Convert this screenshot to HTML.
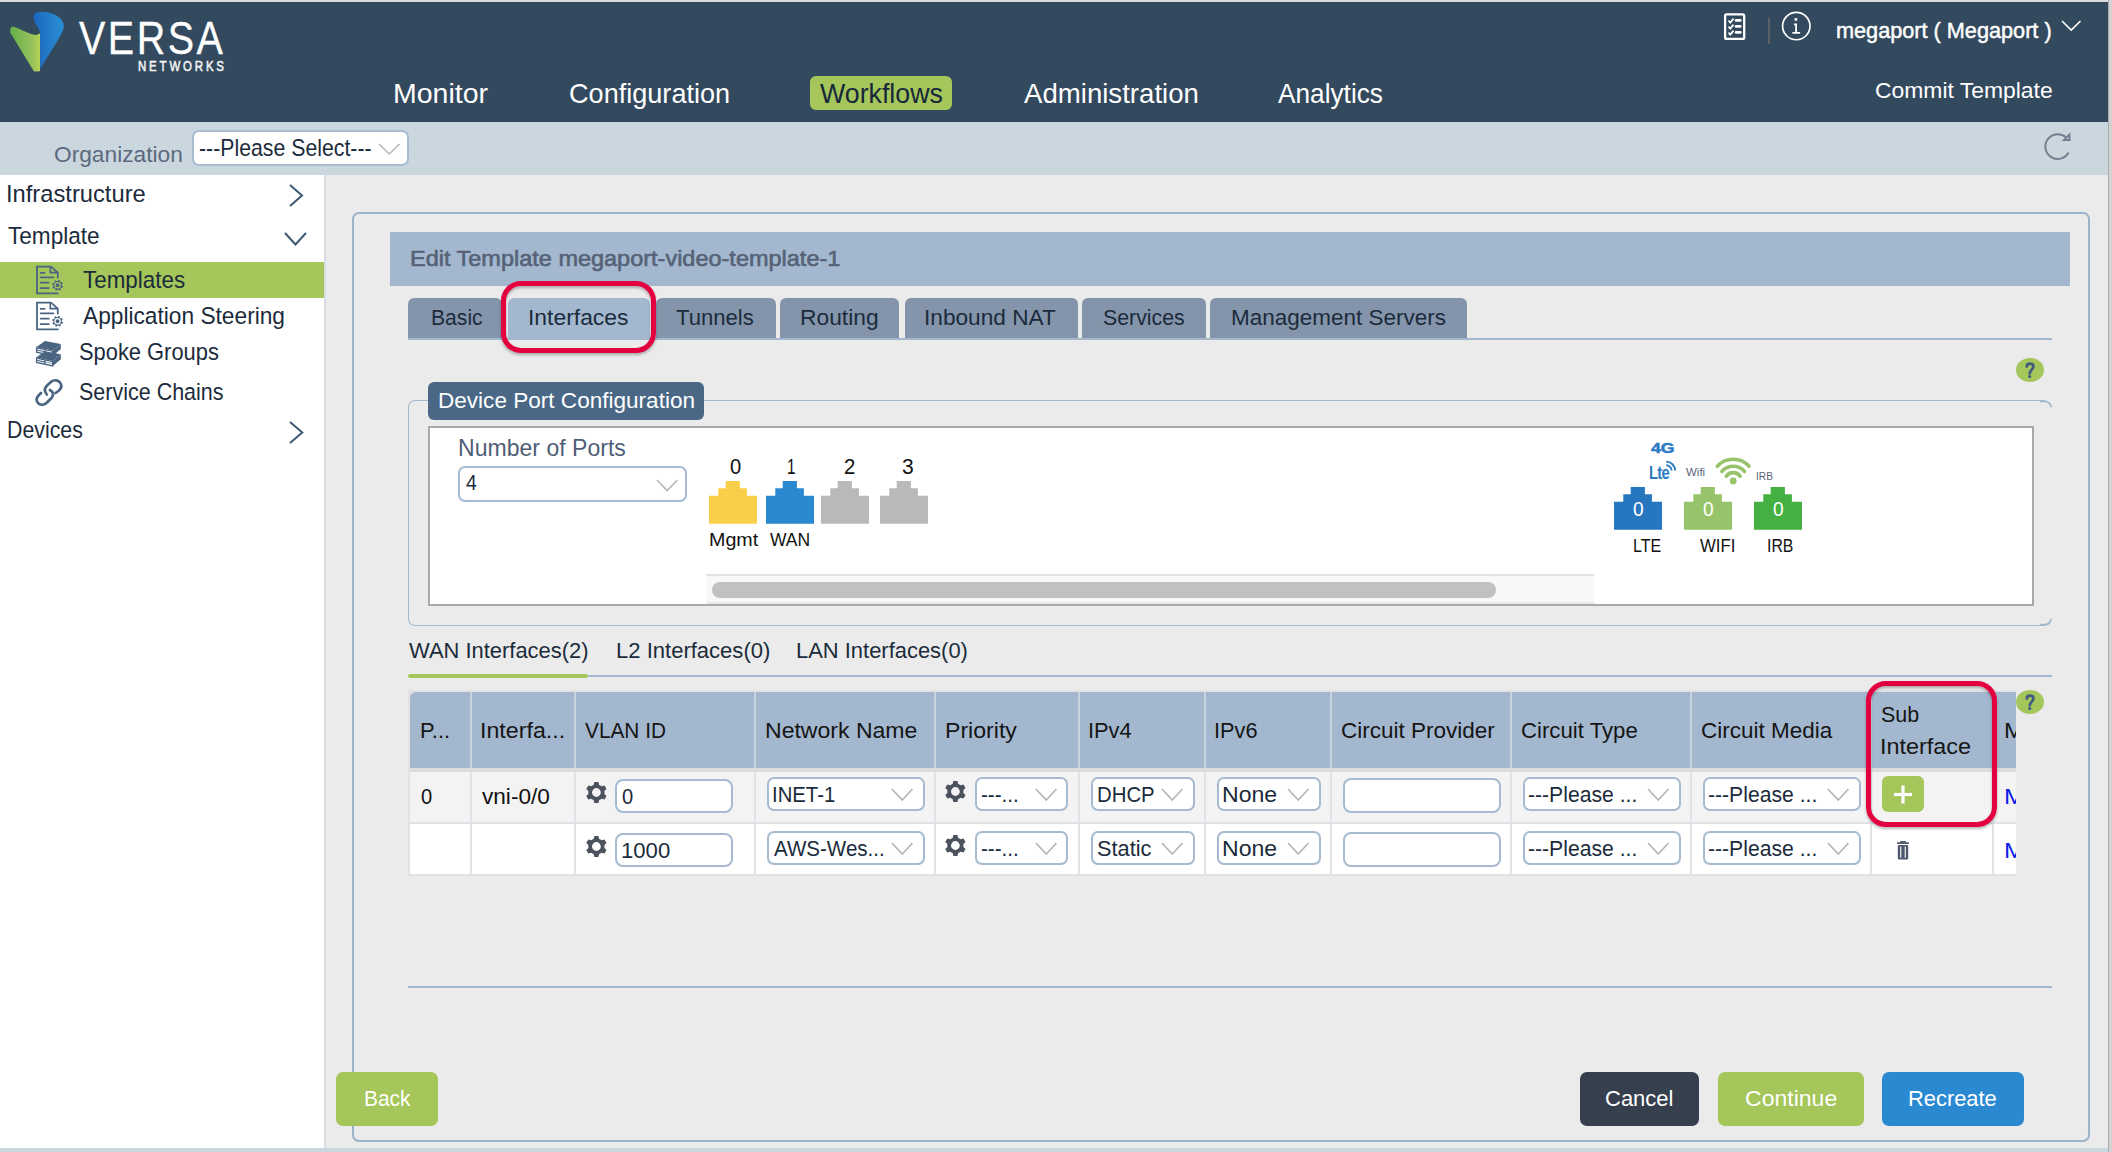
<!DOCTYPE html>
<html><head><meta charset="utf-8"><title>Versa</title>
<style>
html,body{margin:0;padding:0;width:2112px;height:1152px;overflow:hidden;background:#ebebeb;font-family:"Liberation Sans",sans-serif;}
body{position:relative;}
</style></head><body>
<div style="position:absolute;left:0px;top:0px;width:2112px;height:2px;background:#d9dadd;"></div>
<div style="position:absolute;left:0px;top:2px;width:2108px;height:120px;background:#33495e;"></div>
<div style="position:absolute;left:0px;top:122px;width:2108px;height:53px;background:#cbd7df;"></div>
<div style="position:absolute;left:0px;top:175px;width:324px;height:973px;background:#ffffff;"></div>
<div style="position:absolute;left:324px;top:175px;width:2px;height:973px;background:#d8dde3;"></div>
<div style="position:absolute;left:0px;top:1148px;width:2108px;height:4px;background:#cbd7df;"></div>
<div style="position:absolute;left:2108px;top:0px;width:1px;height:1152px;background:#a9a9a9;"></div>
<div style="position:absolute;left:2109px;top:0px;width:3px;height:1152px;background:#d3d3d3;"></div>
<svg style="position:absolute;left:0px;top:0px;" width="80" height="80" viewBox="0 0 80 80">
<defs>
<linearGradient id="lg" x1="0" y1="0" x2="1" y2="0"><stop offset="0" stop-color="#66ad4b"/><stop offset="0.75" stop-color="#97c25a"/><stop offset="1" stop-color="#b4d152"/></linearGradient>
<linearGradient id="lb" x1="0" y1="0" x2="1" y2="0"><stop offset="0" stop-color="#1d66bd"/><stop offset="1" stop-color="#2a90d6"/></linearGradient>
</defs>
<path d="M10.3,28.5 C11,26 14,26.5 18,28.3 C26,32 33,35.5 37,34.8 L40,33.2 L40,71.3 L34,71.5 L10.2,32.5 Z" fill="url(#lg)"/>
<path d="M40,33.2 C40,28 33.5,23.5 33.5,17 C33.5,12.5 38.5,11.5 44,11.8 C54,12.5 63.8,18 63.8,26.5 C63.8,33 50,52 40.2,69.3 Z" fill="url(#lb)"/>
</svg>
<div style="position:absolute;left:809.6px;top:76px;width:142.69999999999993px;height:33.7px;background:#a5c65a;border-radius:6px;"></div>
<svg style="position:absolute;left:1720px;top:10px;" width="30" height="34" viewBox="0 0 30 34">
<rect x="5.1" y="4.35" width="19.1" height="24.6" rx="1.4" fill="none" stroke="#fff" stroke-width="2.3"/>
<polyline points="8.5,10.6 10.3,12.6 13.5,8.6" fill="none" stroke="#fff" stroke-width="1.7"/>
<polyline points="8.5,16.6 10.3,18.6 13.5,14.6" fill="none" stroke="#fff" stroke-width="1.7"/>
<polyline points="8.5,22.6 10.3,24.6 13.5,20.6" fill="none" stroke="#fff" stroke-width="1.7"/>
<line x1="16" y1="10.4" x2="20.3" y2="10.4" stroke="#fff" stroke-width="2.6" stroke-linecap="round"/>
<line x1="16" y1="16.4" x2="20.3" y2="16.4" stroke="#fff" stroke-width="2.6" stroke-linecap="round"/>
<line x1="16" y1="22.4" x2="20.3" y2="22.4" stroke="#fff" stroke-width="2.6" stroke-linecap="round"/>
</svg>
<div style="position:absolute;left:1768.1px;top:18.2px;width:1.900000000000091px;height:25.599999999999998px;background:#5b5f66;"></div>
<svg style="position:absolute;left:1780px;top:10px;" width="32" height="32" viewBox="0 0 32 32">
<circle cx="16.3" cy="16.05" r="13.7" fill="none" stroke="#fff" stroke-width="1.7"/>
<rect x="14.6" y="8.1" width="2.6" height="2.6" fill="#fff"/>
<path d="M13.9,14.3 H16.1 V22.9 M12.4,22.9 H20.1" fill="none" stroke="#fff" stroke-width="1.8"/>
</svg>
<svg style="position:absolute;left:2060px;top:18.8px;" width="22.5" height="13.2" viewBox="0 0 22.5 13.2"><polyline points="2,2 11.25,11.2 20.5,2" fill="none" stroke="#ffffff" stroke-width="1.6"/></svg>
<div style="position:absolute;box-sizing:border-box;left:192px;top:130px;width:217px;height:35.5px;border:2px solid #a7bccf;border-radius:7px;background:#ffffff;"></div>
<svg style="position:absolute;left:376.5px;top:141.5px;" width="24.5" height="14.0" viewBox="0 0 24.5 14.0"><polyline points="2,2 12.25,12.0 22.5,2" fill="none" stroke="#b7b7b7" stroke-width="1.6"/></svg>
<svg style="position:absolute;left:2040px;top:128px;" width="36" height="36" viewBox="0 0 36 36">
<path d="M26.3,9.6 A12.4,12.4 0 1 0 28.6,24.6" fill="none" stroke="#747e8f" stroke-width="2"/>
<polygon points="29.4,6.6 24,11.9 29.6,11.9" fill="none" stroke="#747e8f" stroke-width="2" stroke-linejoin="miter"/>
</svg>
<svg style="position:absolute;left:288px;top:182.5px;" width="16" height="25.0" viewBox="0 0 16 25.0"><polyline points="2,2 14,12.5 2,23.0" fill="none" stroke="#3e5876" stroke-width="2"/></svg>
<svg style="position:absolute;left:282.5px;top:231px;" width="25.0" height="15.5" viewBox="0 0 25.0 15.5"><polyline points="2,2 12.5,13.5 23.0,2" fill="none" stroke="#3e5876" stroke-width="2"/></svg>
<div style="position:absolute;left:0px;top:261.7px;width:324px;height:36.0px;background:#a5c65a;"></div>
<svg style="position:absolute;left:288px;top:420.3px;" width="16.30000000000001" height="25.099999999999966" viewBox="0 0 16.30000000000001 25.099999999999966"><polyline points="2,2 14.300000000000011,12.549999999999983 2,23.099999999999966" fill="none" stroke="#3e5876" stroke-width="2"/></svg>
<svg style="position:absolute;left:32px;top:260px;" width="34" height="36" viewBox="0 0 34 36">
<path d="M5,6.6 H19 L25.8,12.6 V17.6" fill="none" stroke="#4a6482" stroke-width="1.8" stroke-linejoin="round" stroke-linecap="round"/>
<path d="M18.3,7 V12.6 H25.5" fill="none" stroke="#4a6482" stroke-width="1.6"/>
<path d="M5,6.6 V33.4 H25.8" fill="none" stroke="#4a6482" stroke-width="1.8" stroke-linecap="round"/>
<line x1="8.6" y1="12.8" x2="12.6" y2="12.8" stroke="#4a6482" stroke-width="1.8" stroke-linecap="round"/>
<line x1="8.6" y1="17.3" x2="21.4" y2="17.3" stroke="#4a6482" stroke-width="1.8" stroke-linecap="round"/>
<line x1="8.6" y1="22.6" x2="16.8" y2="22.6" stroke="#4a6482" stroke-width="1.8" stroke-linecap="round"/>
<line x1="8.6" y1="28.1" x2="16.8" y2="28.1" stroke="#4a6482" stroke-width="1.8" stroke-linecap="round"/>
<polygon points="29.80,25.30 31.09,26.39 30.77,27.44 29.09,27.63 28.57,28.27 28.71,29.96 27.74,30.47 26.42,29.42 25.60,29.50 24.51,30.79 23.46,30.47 23.27,28.79 22.63,28.27 20.94,28.41 20.43,27.44 21.48,26.12 21.40,25.30 20.11,24.21 20.43,23.16 22.11,22.97 22.63,22.33 22.49,20.64 23.46,20.13 24.78,21.18 25.60,21.10 26.69,19.81 27.74,20.13 27.93,21.81 28.57,22.33 30.26,22.19 30.77,23.16 29.72,24.48" fill="#4a6482"/>
<circle cx="25.6" cy="25.3" r="2.6" fill="none" stroke="#a5c65a" stroke-width="1.3"/>
</svg>
<svg style="position:absolute;left:32px;top:295.6px;" width="34" height="36" viewBox="0 0 34 36">
<path d="M5,6.6 H19 L25.8,12.6 V17.6" fill="none" stroke="#4a6482" stroke-width="1.8" stroke-linejoin="round" stroke-linecap="round"/>
<path d="M18.3,7 V12.6 H25.5" fill="none" stroke="#4a6482" stroke-width="1.6"/>
<path d="M5,6.6 V33.4 H25.8" fill="none" stroke="#4a6482" stroke-width="1.8" stroke-linecap="round"/>
<line x1="8.6" y1="12.8" x2="12.6" y2="12.8" stroke="#4a6482" stroke-width="1.8" stroke-linecap="round"/>
<line x1="8.6" y1="17.3" x2="21.4" y2="17.3" stroke="#4a6482" stroke-width="1.8" stroke-linecap="round"/>
<line x1="8.6" y1="22.6" x2="16.8" y2="22.6" stroke="#4a6482" stroke-width="1.8" stroke-linecap="round"/>
<line x1="8.6" y1="28.1" x2="16.8" y2="28.1" stroke="#4a6482" stroke-width="1.8" stroke-linecap="round"/>
<polygon points="29.80,25.30 31.09,26.39 30.77,27.44 29.09,27.63 28.57,28.27 28.71,29.96 27.74,30.47 26.42,29.42 25.60,29.50 24.51,30.79 23.46,30.47 23.27,28.79 22.63,28.27 20.94,28.41 20.43,27.44 21.48,26.12 21.40,25.30 20.11,24.21 20.43,23.16 22.11,22.97 22.63,22.33 22.49,20.64 23.46,20.13 24.78,21.18 25.60,21.10 26.69,19.81 27.74,20.13 27.93,21.81 28.57,22.33 30.26,22.19 30.77,23.16 29.72,24.48" fill="#4a6482"/>
<circle cx="25.6" cy="25.3" r="2.6" fill="none" stroke="#ffffff" stroke-width="1.3"/>
</svg>
<svg style="position:absolute;left:0;top:0" width="70" height="420" viewBox="0 0 70 420"><polygon points="36,347.3 45,341 60.8,344 52.6,350.6" fill="#4a6482"/>
<polygon points="36.6,347.9 52.6,351.2 52.6,355.6 36.6,352.2" fill="#fff" stroke="#4a6482" stroke-width="1.3"/>
<polygon points="52.6,350.6 60.8,344 60.8,349 52.6,356" fill="#4a6482"/>
<line x1="36.6" y1="350" x2="45" y2="351.8" stroke="#4a6482" stroke-width="1.1"/>
<line x1="45" y1="349.8" x2="45" y2="353.8" stroke="#4a6482" stroke-width="1.1"/>
<line x1="45" y1="351.8" x2="52.6" y2="353.4" stroke="#4a6482" stroke-width="0.6"/><polygon points="36,357.6 45,351.3 60.8,354.3 52.6,360.90000000000003" fill="#4a6482"/>
<polygon points="36.6,358.2 52.6,361.5 52.6,365.90000000000003 36.6,362.5" fill="#fff" stroke="#4a6482" stroke-width="1.3"/>
<polygon points="52.6,360.90000000000003 60.8,354.3 60.8,359.3 52.6,366.3" fill="#4a6482"/>
<line x1="36.6" y1="360.3" x2="45" y2="362.1" stroke="#4a6482" stroke-width="1.1"/>
<line x1="45" y1="360.1" x2="45" y2="364.1" stroke="#4a6482" stroke-width="1.1"/>
<line x1="45" y1="362.1" x2="52.6" y2="363.7" stroke="#4a6482" stroke-width="0.6"/></svg>
<svg style="position:absolute;left:0;top:0" width="70" height="420" viewBox="0 0 70 420">
<path d="M46.8,394.5 C44,391 44.5,388 47,385.5 L51.5,381.5 C54,379.5 58,380 60,382.5 C62,385 61.5,388 59,390.5 L55.5,393" fill="none" stroke="#4a6482" stroke-width="2.7" stroke-linecap="round"/>
<path d="M41,393 L38.5,395.5 C36,398 36,401.5 38.5,403.5 C41,405.5 44.5,405 47,402.5 L51.5,398 C54,395.5 53.5,392 50,390" fill="none" stroke="#4a6482" stroke-width="2.7" stroke-linecap="round"/>
</svg>
<div style="position:absolute;box-sizing:border-box;left:352px;top:212px;width:1738px;height:930px;border:2px solid #9bb3ca;border-radius:7px;background:transparent;"></div>
<div style="position:absolute;left:390px;top:232px;width:1680px;height:54px;background:#a3b8cf;"></div>
<div style="position:absolute;left:408px;top:338px;width:1644px;height:2px;background:#a3b8cf;"></div>
<div style="position:absolute;left:408.1px;top:298px;width:93.59999999999997px;height:40px;background:#8495ab;border-radius:6px 6px 0 0;"></div>
<div style="position:absolute;left:508px;top:298px;width:142px;height:41.5px;background:#a3b8cf;border-radius:6px 6px 0 0;"></div>
<div style="position:absolute;left:655.5px;top:298px;width:120.5px;height:40px;background:#8495ab;border-radius:6px 6px 0 0;"></div>
<div style="position:absolute;left:780px;top:298px;width:119.39999999999998px;height:40px;background:#8495ab;border-radius:6px 6px 0 0;"></div>
<div style="position:absolute;left:904.5px;top:298px;width:173.0999999999999px;height:40px;background:#8495ab;border-radius:6px 6px 0 0;"></div>
<div style="position:absolute;left:1082px;top:298px;width:124px;height:40px;background:#8495ab;border-radius:6px 6px 0 0;"></div>
<div style="position:absolute;left:1210.3px;top:298px;width:257.20000000000005px;height:40px;background:#8495ab;border-radius:6px 6px 0 0;"></div>
<div style="position:absolute;box-sizing:border-box;left:500.7px;top:280.9px;width:155.3px;height:72.10000000000002px;border:5.2px solid #e2003f;border-radius:20px;background:transparent;box-shadow:0 2px 3px rgba(0,0,0,.28), inset 0 2px 3px rgba(0,0,0,.28);"></div>
<svg style="position:absolute;left:2016px;top:358px;" width="28" height="24" viewBox="0 0 28 24"><ellipse cx="14.0" cy="12.0" rx="14.0" ry="12.0" fill="#a5c65a"/>
<path d="M10.8,8.6 C10.8,4.7 17.4,4.7 17.4,8.6 C17.4,11.4 14.1,11.8 13.7,15.3" fill="none" stroke="#3f5b80" stroke-width="2.7" stroke-linecap="round"/>
<circle cx="13.7" cy="18.5" r="1.6" fill="#3f5b80"/></svg>
<div style="position:absolute;box-sizing:border-box;left:408.3px;top:400.4px;width:1637px;height:225.3px;border:1.9px solid #a3b9ce;border-right:none;border-radius:7px 0 0 7px;"></div>
<svg style="position:absolute;left:2040px;top:396px;" width="16" height="234" viewBox="0 0 16 234"><path d="M5,5.35 A6,6 0 0 1 11,11.35" fill="none" stroke="#a3b9ce" stroke-width="1.9"/><path d="M5,228.75 A6,6 0 0 0 11,222.75" fill="none" stroke="#a3b9ce" stroke-width="1.9"/><line x1="0" y1="5.35" x2="5" y2="5.35" stroke="#a3b9ce" stroke-width="1.9"/><line x1="0" y1="228.75" x2="5" y2="228.75" stroke="#a3b9ce" stroke-width="1.9"/></svg>
<div style="position:absolute;left:428px;top:382px;width:276px;height:38px;background:#4a6886;border-radius:6px;"></div>
<div style="position:absolute;box-sizing:border-box;left:428px;top:426px;width:1606px;height:180px;border:2px solid #a9a9a9;border-radius:0px;background:#ffffff;"></div>
<div style="position:absolute;box-sizing:border-box;left:458.2px;top:466px;width:229.3px;height:35.80000000000001px;border:2px solid #a6bbd0;border-radius:7px;background:#ffffff;"></div>
<svg style="position:absolute;left:654.6px;top:477.5px;" width="24.399999999999977" height="14.5" viewBox="0 0 24.399999999999977 14.5"><polyline points="2,2 12.199999999999989,12.5 22.399999999999977,2" fill="none" stroke="#b5b5b5" stroke-width="1.6"/></svg>
<svg style="position:absolute;left:708.9px;top:481.2px;" width="48" height="43" viewBox="0 0 48 43"><path d="M16.7,0 H30.9 V7.3 H37.9 V14.8 H48 V42.7 H0 V14.8 H9.3 V7.3 H16.7 Z" fill="#f9cf4a"/></svg>
<svg style="position:absolute;left:766.1px;top:481.2px;" width="48" height="43" viewBox="0 0 48 43"><path d="M16.7,0 H30.9 V7.3 H37.9 V14.8 H48 V42.7 H0 V14.8 H9.3 V7.3 H16.7 Z" fill="#2a89d0"/></svg>
<svg style="position:absolute;left:821.4px;top:481.2px;" width="48" height="43" viewBox="0 0 48 43"><path d="M16.7,0 H30.9 V7.3 H37.9 V14.8 H48 V42.7 H0 V14.8 H9.3 V7.3 H16.7 Z" fill="#b9b9b9"/></svg>
<svg style="position:absolute;left:880.2px;top:481.2px;" width="48" height="43" viewBox="0 0 48 43"><path d="M16.7,0 H30.9 V7.3 H37.9 V14.8 H48 V42.7 H0 V14.8 H9.3 V7.3 H16.7 Z" fill="#b9b9b9"/></svg>
<div style="position:absolute;left:706px;top:574px;width:888px;height:30px;background:#f8f8f8;"></div>
<div style="position:absolute;left:706px;top:574px;width:888px;height:2px;background:#e1e1e1;"></div>
<div style="position:absolute;left:706px;top:602px;width:888px;height:2px;background:#e9e9e9;"></div>
<div style="position:absolute;left:712px;top:582px;width:784px;height:16px;background:#c1c1c1;border-radius:8px;"></div>
<svg style="position:absolute;left:1613.8px;top:487.1px;" width="48" height="43" viewBox="0 0 48 43"><path d="M16.7,0 H30.9 V7.3 H37.9 V14.8 H48 V42.7 H0 V14.8 H9.3 V7.3 H16.7 Z" fill="#2777c0"/></svg>
<svg style="position:absolute;left:1684px;top:487.1px;" width="48" height="43" viewBox="0 0 48 43"><path d="M16.7,0 H30.9 V7.3 H37.9 V14.8 H48 V42.7 H0 V14.8 H9.3 V7.3 H16.7 Z" fill="#97c46a"/></svg>
<svg style="position:absolute;left:1754px;top:487.1px;" width="48" height="43" viewBox="0 0 48 43"><path d="M16.7,0 H30.9 V7.3 H37.9 V14.8 H48 V42.7 H0 V14.8 H9.3 V7.3 H16.7 Z" fill="#43b041"/></svg>
<svg style="position:absolute;left:1660px;top:455px;" width="20" height="20" viewBox="0 0 20 20"><path d="M6.3,10.2 A5.4,5.4 0 0 1 11.6,15.6" fill="none" stroke="#2a7bc4" stroke-width="1.9"/>
<path d="M6.1,6.6 A9,9 0 0 1 15.1,15.6" fill="none" stroke="#2a7bc4" stroke-width="1.9"/></svg>
<svg style="position:absolute;left:1714px;top:456px;" width="38" height="30" viewBox="0 0 38 30"><path d="M3.33,10.20 A21.7,21.7 0 0 1 35.07,10.20" fill="none" stroke="#97c46a" stroke-width="3.6" stroke-linecap="round"/>
<path d="M7.86,15.49 A14.8,14.8 0 0 1 30.54,15.49" fill="none" stroke="#97c46a" stroke-width="3.6" stroke-linecap="round"/>
<path d="M12.24,20.30 A8.4,8.4 0 0 1 26.16,20.30" fill="none" stroke="#97c46a" stroke-width="3.6" stroke-linecap="round"/>
<circle cx="19.2" cy="25.0" r="3.4" fill="#97c46a"/></svg>
<div style="position:absolute;left:588px;top:674.5px;width:1464px;height:2.0px;background:#a3b8cf;"></div>
<div style="position:absolute;left:408px;top:674px;width:180px;height:3.5px;background:#a5c65a;border-radius:2px;"></div>
<div style="position:absolute;left:408px;top:690.2px;width:1608px;height:185.79999999999995px;background:#e2e2e2;"></div>
<div style="position:absolute;left:410px;top:692.2px;width:1606px;height:75.79999999999995px;background:#a3b8cf;border-radius:6px 0 0 0;"></div>
<div style="position:absolute;left:410px;top:768px;width:1606px;height:4px;background:#dcdcdc;"></div>
<div style="position:absolute;left:410px;top:772px;width:1606px;height:50px;background:#f3f3f3;"></div>
<div style="position:absolute;left:410px;top:822px;width:1606px;height:2px;background:#dfe3e8;"></div>
<div style="position:absolute;left:410px;top:824px;width:1606px;height:50px;background:#ffffff;"></div>
<div style="position:absolute;left:410px;top:874px;width:1606px;height:2px;background:#dfe3e8;"></div>
<div style="position:absolute;left:470px;top:692.2px;width:2px;height:75.79999999999995px;background:#c9d3de;"></div>
<div style="position:absolute;left:470px;top:772px;width:2px;height:102px;background:#dfe3e8;"></div>
<div style="position:absolute;left:574px;top:692.2px;width:2px;height:75.79999999999995px;background:#c9d3de;"></div>
<div style="position:absolute;left:574px;top:772px;width:2px;height:102px;background:#dfe3e8;"></div>
<div style="position:absolute;left:754px;top:692.2px;width:2px;height:75.79999999999995px;background:#c9d3de;"></div>
<div style="position:absolute;left:754px;top:772px;width:2px;height:102px;background:#dfe3e8;"></div>
<div style="position:absolute;left:934px;top:692.2px;width:2px;height:75.79999999999995px;background:#c9d3de;"></div>
<div style="position:absolute;left:934px;top:772px;width:2px;height:102px;background:#dfe3e8;"></div>
<div style="position:absolute;left:1078px;top:692.2px;width:2px;height:75.79999999999995px;background:#c9d3de;"></div>
<div style="position:absolute;left:1078px;top:772px;width:2px;height:102px;background:#dfe3e8;"></div>
<div style="position:absolute;left:1204px;top:692.2px;width:2px;height:75.79999999999995px;background:#c9d3de;"></div>
<div style="position:absolute;left:1204px;top:772px;width:2px;height:102px;background:#dfe3e8;"></div>
<div style="position:absolute;left:1330px;top:692.2px;width:2px;height:75.79999999999995px;background:#c9d3de;"></div>
<div style="position:absolute;left:1330px;top:772px;width:2px;height:102px;background:#dfe3e8;"></div>
<div style="position:absolute;left:1510px;top:692.2px;width:2px;height:75.79999999999995px;background:#c9d3de;"></div>
<div style="position:absolute;left:1510px;top:772px;width:2px;height:102px;background:#dfe3e8;"></div>
<div style="position:absolute;left:1690px;top:692.2px;width:2px;height:75.79999999999995px;background:#c9d3de;"></div>
<div style="position:absolute;left:1690px;top:772px;width:2px;height:102px;background:#dfe3e8;"></div>
<div style="position:absolute;left:1870px;top:692.2px;width:2px;height:75.79999999999995px;background:#c9d3de;"></div>
<div style="position:absolute;left:1870px;top:772px;width:2px;height:102px;background:#dfe3e8;"></div>
<div style="position:absolute;left:1992px;top:692.2px;width:2px;height:75.79999999999995px;background:#c9d3de;"></div>
<div style="position:absolute;left:1992px;top:772px;width:2px;height:102px;background:#dfe3e8;"></div>
<svg style="position:absolute;left:585.6px;top:781.3000000000001px;" width="22" height="22" viewBox="0 0 22 22"><path d="M6.35,4.49 L7.63,3.89 L8.36,1.00 L12.44,1.00 L13.17,3.89 L14.45,4.49 L15.61,5.30 L18.48,4.48 L20.52,8.02 L18.38,10.09 L18.50,11.50 L18.38,12.91 L20.52,14.98 L18.48,18.52 L15.61,17.70 L14.45,18.51 L13.17,19.11 L12.44,22.00 L8.36,22.00 L7.63,19.11 L6.35,18.51 L5.19,17.70 L2.32,18.52 L0.28,14.98 L2.42,12.91 L2.30,11.50 L2.42,10.09 L0.28,8.02 L2.32,4.48 L5.19,5.30 Z M14.8,11.5 A4.4,4.4 0 1 0 6.0,11.5 A4.4,4.4 0 1 0 14.8,11.5 Z" fill="#4b525e" fill-rule="evenodd"/></svg>
<div style="position:absolute;box-sizing:border-box;left:614.5px;top:778.6px;width:118.70000000000005px;height:34.89999999999998px;border:2px solid #a6bbd0;border-radius:8px;background:#fff;"></div>
<div style="position:absolute;box-sizing:border-box;left:766.9px;top:776.7px;width:158.5px;height:34.69999999999993px;border:2px solid #a6bbd0;border-radius:7px;background:#fff;"></div>
<svg style="position:absolute;left:890.4px;top:786.7px;" width="24.5" height="15.0" viewBox="0 0 24.5 15.0"><polyline points="2,2 12.25,13.0 22.5,2" fill="none" stroke="#b5b5b5" stroke-width="1.6"/></svg>
<svg style="position:absolute;left:945.4000000000001px;top:779.5px;" width="22" height="22" viewBox="0 0 22 22"><path d="M6.35,4.49 L7.63,3.89 L8.36,1.00 L12.44,1.00 L13.17,3.89 L14.45,4.49 L15.61,5.30 L18.48,4.48 L20.52,8.02 L18.38,10.09 L18.50,11.50 L18.38,12.91 L20.52,14.98 L18.48,18.52 L15.61,17.70 L14.45,18.51 L13.17,19.11 L12.44,22.00 L8.36,22.00 L7.63,19.11 L6.35,18.51 L5.19,17.70 L2.32,18.52 L0.28,14.98 L2.42,12.91 L2.30,11.50 L2.42,10.09 L0.28,8.02 L2.32,4.48 L5.19,5.30 Z M14.8,11.5 A4.4,4.4 0 1 0 6.0,11.5 A4.4,4.4 0 1 0 14.8,11.5 Z" fill="#4b525e" fill-rule="evenodd"/></svg>
<div style="position:absolute;box-sizing:border-box;left:974.7px;top:776.7px;width:93.09999999999991px;height:34.69999999999993px;border:2px solid #a6bbd0;border-radius:7px;background:#fff;"></div>
<svg style="position:absolute;left:1034px;top:786.7px;" width="24.5" height="15.0" viewBox="0 0 24.5 15.0"><polyline points="2,2 12.25,13.0 22.5,2" fill="none" stroke="#b5b5b5" stroke-width="1.6"/></svg>
<div style="position:absolute;box-sizing:border-box;left:1090.7px;top:776.5px;width:104.59999999999991px;height:34.5px;border:2px solid #a6bbd0;border-radius:7px;background:#fff;"></div>
<svg style="position:absolute;left:1160.2px;top:786.5px;" width="24.5" height="15.0" viewBox="0 0 24.5 15.0"><polyline points="2,2 12.25,13.0 22.5,2" fill="none" stroke="#b5b5b5" stroke-width="1.6"/></svg>
<div style="position:absolute;box-sizing:border-box;left:1216.6px;top:776.5px;width:104.80000000000018px;height:34.5px;border:2px solid #a6bbd0;border-radius:7px;background:#fff;"></div>
<svg style="position:absolute;left:1286.2px;top:786.5px;" width="24.5" height="15.0" viewBox="0 0 24.5 15.0"><polyline points="2,2 12.25,13.0 22.5,2" fill="none" stroke="#b5b5b5" stroke-width="1.6"/></svg>
<div style="position:absolute;box-sizing:border-box;left:1342.7px;top:778.4px;width:158.79999999999995px;height:34.80000000000007px;border:2px solid #a6bbd0;border-radius:8px;background:#fff;"></div>
<div style="position:absolute;box-sizing:border-box;left:1523px;top:776.8px;width:157.79999999999995px;height:34.5px;border:2px solid #a6bbd0;border-radius:7px;background:#fff;"></div>
<svg style="position:absolute;left:1645.8px;top:786.8px;" width="24.5" height="15.0" viewBox="0 0 24.5 15.0"><polyline points="2,2 12.25,13.0 22.5,2" fill="none" stroke="#b5b5b5" stroke-width="1.6"/></svg>
<div style="position:absolute;box-sizing:border-box;left:1703px;top:776.8px;width:157.70000000000005px;height:34.5px;border:2px solid #a6bbd0;border-radius:7px;background:#fff;"></div>
<svg style="position:absolute;left:1825.8px;top:786.8px;" width="24.5" height="15.0" viewBox="0 0 24.5 15.0"><polyline points="2,2 12.25,13.0 22.5,2" fill="none" stroke="#b5b5b5" stroke-width="1.6"/></svg>
<svg style="position:absolute;left:585.6px;top:835.3000000000001px;" width="22" height="22" viewBox="0 0 22 22"><path d="M6.35,4.49 L7.63,3.89 L8.36,1.00 L12.44,1.00 L13.17,3.89 L14.45,4.49 L15.61,5.30 L18.48,4.48 L20.52,8.02 L18.38,10.09 L18.50,11.50 L18.38,12.91 L20.52,14.98 L18.48,18.52 L15.61,17.70 L14.45,18.51 L13.17,19.11 L12.44,22.00 L8.36,22.00 L7.63,19.11 L6.35,18.51 L5.19,17.70 L2.32,18.52 L0.28,14.98 L2.42,12.91 L2.30,11.50 L2.42,10.09 L0.28,8.02 L2.32,4.48 L5.19,5.30 Z M14.8,11.5 A4.4,4.4 0 1 0 6.0,11.5 A4.4,4.4 0 1 0 14.8,11.5 Z" fill="#4b525e" fill-rule="evenodd"/></svg>
<div style="position:absolute;box-sizing:border-box;left:614.5px;top:832.6px;width:118.70000000000005px;height:34.89999999999998px;border:2px solid #a6bbd0;border-radius:8px;background:#fff;"></div>
<div style="position:absolute;box-sizing:border-box;left:766.9px;top:830.7px;width:158.5px;height:34.69999999999993px;border:2px solid #a6bbd0;border-radius:7px;background:#fff;"></div>
<svg style="position:absolute;left:890.4px;top:840.7px;" width="24.5" height="15.0" viewBox="0 0 24.5 15.0"><polyline points="2,2 12.25,13.0 22.5,2" fill="none" stroke="#b5b5b5" stroke-width="1.6"/></svg>
<svg style="position:absolute;left:945.4000000000001px;top:833.5px;" width="22" height="22" viewBox="0 0 22 22"><path d="M6.35,4.49 L7.63,3.89 L8.36,1.00 L12.44,1.00 L13.17,3.89 L14.45,4.49 L15.61,5.30 L18.48,4.48 L20.52,8.02 L18.38,10.09 L18.50,11.50 L18.38,12.91 L20.52,14.98 L18.48,18.52 L15.61,17.70 L14.45,18.51 L13.17,19.11 L12.44,22.00 L8.36,22.00 L7.63,19.11 L6.35,18.51 L5.19,17.70 L2.32,18.52 L0.28,14.98 L2.42,12.91 L2.30,11.50 L2.42,10.09 L0.28,8.02 L2.32,4.48 L5.19,5.30 Z M14.8,11.5 A4.4,4.4 0 1 0 6.0,11.5 A4.4,4.4 0 1 0 14.8,11.5 Z" fill="#4b525e" fill-rule="evenodd"/></svg>
<div style="position:absolute;box-sizing:border-box;left:974.7px;top:830.7px;width:93.09999999999991px;height:34.69999999999993px;border:2px solid #a6bbd0;border-radius:7px;background:#fff;"></div>
<svg style="position:absolute;left:1034px;top:840.7px;" width="24.5" height="15.0" viewBox="0 0 24.5 15.0"><polyline points="2,2 12.25,13.0 22.5,2" fill="none" stroke="#b5b5b5" stroke-width="1.6"/></svg>
<div style="position:absolute;box-sizing:border-box;left:1090.7px;top:830.5px;width:104.59999999999991px;height:34.5px;border:2px solid #a6bbd0;border-radius:7px;background:#fff;"></div>
<svg style="position:absolute;left:1160.2px;top:840.5px;" width="24.5" height="15.0" viewBox="0 0 24.5 15.0"><polyline points="2,2 12.25,13.0 22.5,2" fill="none" stroke="#b5b5b5" stroke-width="1.6"/></svg>
<div style="position:absolute;box-sizing:border-box;left:1216.6px;top:830.5px;width:104.80000000000018px;height:34.5px;border:2px solid #a6bbd0;border-radius:7px;background:#fff;"></div>
<svg style="position:absolute;left:1286.2px;top:840.5px;" width="24.5" height="15.0" viewBox="0 0 24.5 15.0"><polyline points="2,2 12.25,13.0 22.5,2" fill="none" stroke="#b5b5b5" stroke-width="1.6"/></svg>
<div style="position:absolute;box-sizing:border-box;left:1342.7px;top:832.4px;width:158.79999999999995px;height:34.80000000000007px;border:2px solid #a6bbd0;border-radius:8px;background:#fff;"></div>
<div style="position:absolute;box-sizing:border-box;left:1523px;top:830.8px;width:157.79999999999995px;height:34.5px;border:2px solid #a6bbd0;border-radius:7px;background:#fff;"></div>
<svg style="position:absolute;left:1645.8px;top:840.8px;" width="24.5" height="15.0" viewBox="0 0 24.5 15.0"><polyline points="2,2 12.25,13.0 22.5,2" fill="none" stroke="#b5b5b5" stroke-width="1.6"/></svg>
<div style="position:absolute;box-sizing:border-box;left:1703px;top:830.8px;width:157.70000000000005px;height:34.5px;border:2px solid #a6bbd0;border-radius:7px;background:#fff;"></div>
<svg style="position:absolute;left:1825.8px;top:840.8px;" width="24.5" height="15.0" viewBox="0 0 24.5 15.0"><polyline points="2,2 12.25,13.0 22.5,2" fill="none" stroke="#b5b5b5" stroke-width="1.6"/></svg>
<div style="position:absolute;left:1882px;top:776px;width:42px;height:36.200000000000045px;background:#a5c65a;border-radius:6px;"></div>
<svg style="position:absolute;left:1882px;top:776px;" width="42" height="36" viewBox="0 0 42 36"><line x1="12" y1="18.5" x2="30" y2="18.5" stroke="#fff" stroke-width="3.2"/><line x1="21" y1="9.5" x2="21" y2="27.5" stroke="#fff" stroke-width="3.2"/></svg>
<svg style="position:absolute;left:1895px;top:839px;" width="16" height="23" viewBox="0 0 16 23"><rect x="2" y="3.2" width="12" height="1.7" rx="0.6" fill="#4f586c"/><rect x="5" y="2.1" width="6" height="1.6" rx="0.8" fill="#4f586c"/>
<rect x="2.8" y="5.9" width="10.4" height="14.6" rx="1" fill="#4f586c"/><rect x="5.2" y="7.5" width="1.1" height="11.2" fill="#fff"/><rect x="9.7" y="7.5" width="1.1" height="11.2" fill="#fff"/></svg>
<div style="position:absolute;box-sizing:border-box;left:1865.8px;top:681px;width:131.20000000000005px;height:146px;border:5.1px solid #e2003f;border-radius:20px;background:transparent;box-shadow:0 2px 3px rgba(0,0,0,.28), inset 0 2px 3px rgba(0,0,0,.28);"></div>
<svg style="position:absolute;left:2016px;top:690px;" width="28" height="24" viewBox="0 0 28 24"><ellipse cx="14.0" cy="12.0" rx="14.0" ry="12.0" fill="#a5c65a"/>
<path d="M10.8,8.6 C10.8,4.7 17.4,4.7 17.4,8.6 C17.4,11.4 14.1,11.8 13.7,15.3" fill="none" stroke="#3f5b80" stroke-width="2.7" stroke-linecap="round"/>
<circle cx="13.7" cy="18.5" r="1.6" fill="#3f5b80"/></svg>
<div style="position:absolute;left:408px;top:986px;width:1644px;height:2px;background:#a3b8cf;"></div>
<div style="position:absolute;left:335.8px;top:1072px;width:102.19999999999999px;height:53.799999999999955px;background:#a5c65a;border-radius:7px;"></div>
<div style="position:absolute;left:1580.4px;top:1072px;width:119.0px;height:53.799999999999955px;background:#363f4e;border-radius:7px;"></div>
<div style="position:absolute;left:1718px;top:1072px;width:145.5999999999999px;height:53.799999999999955px;background:#a5c65a;border-radius:7px;"></div>
<div style="position:absolute;left:1882px;top:1072px;width:141.70000000000005px;height:53.799999999999955px;background:#2a89d0;border-radius:7px;"></div>
<div style="position:absolute;left:78.80px;top:11.30px;font:normal 46.80px/normal 'Liberation Sans';color:#ffffff;white-space:nowrap;transform:scaleX(0.8435);transform-origin:0 0;-webkit-text-stroke:0.3px #fff;letter-spacing:3px;">VERSA</div>
<div style="position:absolute;left:137.67px;top:57.80px;font:normal 13.81px/normal 'Liberation Sans';color:#f4f4f4;white-space:nowrap;transform:scaleX(0.8308);transform-origin:0 0;-webkit-text-stroke:0.5px #f4f4f4;letter-spacing:3.4px;">NETWORKS</div>
<div style="position:absolute;left:393.26px;top:77.60px;font:normal 27.91px/normal 'Liberation Sans';color:#ffffff;white-space:nowrap;transform:scaleX(1.0219);transform-origin:0 0;">Monitor</div>
<div style="position:absolute;left:569.43px;top:77.60px;font:normal 27.91px/normal 'Liberation Sans';color:#ffffff;white-space:nowrap;transform:scaleX(0.9707);transform-origin:0 0;">Configuration</div>
<div style="position:absolute;left:820.30px;top:77.60px;font:normal 27.91px/normal 'Liberation Sans';color:#17283a;white-space:nowrap;transform:scaleX(0.9586);transform-origin:0 0;">Workflows</div>
<div style="position:absolute;left:1024.00px;top:77.60px;font:normal 27.91px/normal 'Liberation Sans';color:#ffffff;white-space:nowrap;transform:scaleX(0.9891);transform-origin:0 0;">Administration</div>
<div style="position:absolute;left:1278.00px;top:77.60px;font:normal 27.91px/normal 'Liberation Sans';color:#ffffff;white-space:nowrap;transform:scaleX(0.9398);transform-origin:0 0;">Analytics</div>
<div style="position:absolute;left:1836.48px;top:19.00px;font:normal 21.22px/normal 'Liberation Sans';color:#ffffff;white-space:nowrap;transform:scaleX(1.0214);transform-origin:0 0;-webkit-text-stroke:0.45px #fff;">megaport ( Megaport )</div>
<div style="position:absolute;left:1875.49px;top:76.50px;font:normal 22.67px/normal 'Liberation Sans';color:#ffffff;white-space:nowrap;transform:scaleX(1.0105);transform-origin:0 0;">Commit Template</div>
<div style="position:absolute;left:53.90px;top:140.70px;font:normal 22.67px/normal 'Liberation Sans';color:#5b6a7e;white-space:nowrap;transform:scaleX(1.0027);transform-origin:0 0;">Organization</div>
<div style="position:absolute;left:199.08px;top:135.00px;font:normal 23.26px/normal 'Liberation Sans';color:#1b2b3b;white-space:nowrap;transform:scaleX(0.9150);transform-origin:0 0;">---Please Select---</div>
<div style="position:absolute;left:5.81px;top:180.30px;font:normal 23.84px/normal 'Liberation Sans';color:#1b2b3b;white-space:nowrap;transform:scaleX(0.9955);transform-origin:0 0;">Infrastructure</div>
<div style="position:absolute;left:7.80px;top:221.80px;font:normal 23.84px/normal 'Liberation Sans';color:#1b2b3b;white-space:nowrap;transform:scaleX(0.9478);transform-origin:0 0;">Template</div>
<div style="position:absolute;left:82.80px;top:265.80px;font:normal 23.84px/normal 'Liberation Sans';color:#1b2b3b;white-space:nowrap;transform:scaleX(0.9403);transform-origin:0 0;">Templates</div>
<div style="position:absolute;left:82.80px;top:301.90px;font:normal 23.84px/normal 'Liberation Sans';color:#1b2b3b;white-space:nowrap;transform:scaleX(0.9531);transform-origin:0 0;">Application Steering</div>
<div style="position:absolute;left:78.78px;top:337.50px;font:normal 23.84px/normal 'Liberation Sans';color:#1b2b3b;white-space:nowrap;transform:scaleX(0.9180);transform-origin:0 0;">Spoke Groups</div>
<div style="position:absolute;left:78.80px;top:377.70px;font:normal 23.84px/normal 'Liberation Sans';color:#1b2b3b;white-space:nowrap;transform:scaleX(0.9019);transform-origin:0 0;">Service Chains</div>
<div style="position:absolute;left:6.91px;top:416.00px;font:normal 23.84px/normal 'Liberation Sans';color:#1b2b3b;white-space:nowrap;transform:scaleX(0.8946);transform-origin:0 0;">Devices</div>
<div style="position:absolute;left:409.74px;top:246.00px;font:normal 22.24px/normal 'Liberation Sans';color:#566276;white-space:nowrap;transform:scaleX(1.0562);transform-origin:0 0;-webkit-text-stroke:0.6px #566276;">Edit Template megaport-video-template-1</div>
<div style="position:absolute;left:430.57px;top:304.30px;font:normal 22.67px/normal 'Liberation Sans';color:#1b2b3b;white-space:nowrap;transform:scaleX(0.9321);transform-origin:0 0;">Basic</div>
<div style="position:absolute;left:528.38px;top:304.30px;font:normal 22.67px/normal 'Liberation Sans';color:#1b2b3b;white-space:nowrap;transform:scaleX(1.0097);transform-origin:0 0;">Interfaces</div>
<div style="position:absolute;left:676.00px;top:304.30px;font:normal 22.67px/normal 'Liberation Sans';color:#1b2b3b;white-space:nowrap;transform:scaleX(0.9757);transform-origin:0 0;">Tunnels</div>
<div style="position:absolute;left:799.99px;top:304.30px;font:normal 22.67px/normal 'Liberation Sans';color:#1b2b3b;white-space:nowrap;transform:scaleX(1.0067);transform-origin:0 0;">Routing</div>
<div style="position:absolute;left:924.00px;top:304.30px;font:normal 22.67px/normal 'Liberation Sans';color:#1b2b3b;white-space:nowrap;">Inbound NAT</div>
<div style="position:absolute;left:1103.06px;top:304.30px;font:normal 22.67px/normal 'Liberation Sans';color:#1b2b3b;white-space:nowrap;transform:scaleX(0.9410);transform-origin:0 0;">Services</div>
<div style="position:absolute;left:1231.01px;top:304.30px;font:normal 22.67px/normal 'Liberation Sans';color:#1b2b3b;white-space:nowrap;transform:scaleX(0.9923);transform-origin:0 0;">Management Servers</div>
<div style="position:absolute;left:437.60px;top:386.60px;font:normal 22.67px/normal 'Liberation Sans';color:#ffffff;white-space:nowrap;transform:scaleX(0.9955);transform-origin:0 0;">Device Port Configuration</div>
<div style="position:absolute;left:458.01px;top:435.40px;font:normal 23.26px/normal 'Liberation Sans';color:#4f5e75;white-space:nowrap;transform:scaleX(0.9914);transform-origin:0 0;">Number of Ports</div>
<div style="position:absolute;left:466.00px;top:469.00px;font:normal 22.97px/normal 'Liberation Sans';color:#1b2b3b;white-space:nowrap;transform:scaleX(0.8462);transform-origin:0 0;">4</div>
<div style="position:absolute;left:729.50px;top:453.90px;font:normal 22.38px/normal 'Liberation Sans';color:#111111;white-space:nowrap;transform:scaleX(0.9000);transform-origin:0 0;">0</div>
<div style="position:absolute;left:786.82px;top:453.90px;font:normal 22.38px/normal 'Liberation Sans';color:#111111;white-space:nowrap;transform:scaleX(0.6818);transform-origin:0 0;">1</div>
<div style="position:absolute;left:844.09px;top:453.90px;font:normal 22.38px/normal 'Liberation Sans';color:#111111;white-space:nowrap;transform:scaleX(0.9091);transform-origin:0 0;">2</div>
<div style="position:absolute;left:901.70px;top:453.90px;font:normal 22.38px/normal 'Liberation Sans';color:#111111;white-space:nowrap;transform:scaleX(0.9417);transform-origin:0 0;">3</div>
<div style="position:absolute;left:709.43px;top:529.00px;font:normal 18.31px/normal 'Liberation Sans';color:#111111;white-space:nowrap;transform:scaleX(1.0748);transform-origin:0 0;">Mgmt</div>
<div style="position:absolute;left:770.00px;top:529.00px;font:normal 18.31px/normal 'Liberation Sans';color:#111111;white-space:nowrap;transform:scaleX(0.9560);transform-origin:0 0;">WAN</div>
<div style="position:absolute;left:1632.70px;top:496.70px;font:normal 20.64px/normal 'Liberation Sans';color:#ffffff;white-space:nowrap;transform:scaleX(0.9273);transform-origin:0 0;">0</div>
<div style="position:absolute;left:1702.90px;top:496.70px;font:normal 20.64px/normal 'Liberation Sans';color:#ffffff;white-space:nowrap;transform:scaleX(0.9273);transform-origin:0 0;">0</div>
<div style="position:absolute;left:1772.90px;top:496.70px;font:normal 20.64px/normal 'Liberation Sans';color:#ffffff;white-space:nowrap;transform:scaleX(0.9273);transform-origin:0 0;">0</div>
<div style="position:absolute;left:1632.91px;top:535.80px;font:normal 18.02px/normal 'Liberation Sans';color:#111111;white-space:nowrap;transform:scaleX(0.8864);transform-origin:0 0;">LTE</div>
<div style="position:absolute;left:1699.80px;top:535.80px;font:normal 18.02px/normal 'Liberation Sans';color:#111111;white-space:nowrap;transform:scaleX(0.9294);transform-origin:0 0;">WIFI</div>
<div style="position:absolute;left:1767.12px;top:535.80px;font:normal 18.02px/normal 'Liberation Sans';color:#111111;white-space:nowrap;transform:scaleX(0.8788);transform-origin:0 0;">IRB</div>
<div style="position:absolute;left:1650.80px;top:440.20px;font:bold 14.83px/normal 'Liberation Sans';color:#2a7bc4;white-space:nowrap;transform:scaleX(1.1956);transform-origin:0 0;-webkit-text-stroke:0.5px #2a7bc4;">4G</div>
<div style="position:absolute;left:1649.33px;top:461.60px;font:bold 19.04px/normal 'Liberation Sans';color:#2a7bc4;white-space:nowrap;transform:scaleX(0.7688);transform-origin:0 0;letter-spacing:-0.8px;">Lte</div>
<div style="position:absolute;left:1685.70px;top:465.80px;font:normal 10.76px/normal 'Liberation Sans';color:#5a6478;white-space:nowrap;transform:scaleX(1.0673);transform-origin:0 0;">Wifi</div>
<div style="position:absolute;left:1755.61px;top:470.00px;font:normal 11.34px/normal 'Liberation Sans';color:#5a6478;white-space:nowrap;transform:scaleX(0.8945);transform-origin:0 0;">IRB</div>
<div style="position:absolute;left:409.00px;top:637.40px;font:normal 22.67px/normal 'Liberation Sans';color:#1b2b3b;white-space:nowrap;transform:scaleX(0.9679);transform-origin:0 0;">WAN Interfaces(2)</div>
<div style="position:absolute;left:615.53px;top:637.40px;font:normal 22.67px/normal 'Liberation Sans';color:#1b2b3b;white-space:nowrap;transform:scaleX(0.9725);transform-origin:0 0;">L2 Interfaces(0)</div>
<div style="position:absolute;left:796.23px;top:637.40px;font:normal 22.67px/normal 'Liberation Sans';color:#1b2b3b;white-space:nowrap;transform:scaleX(0.9682);transform-origin:0 0;">LAN Interfaces(0)</div>
<div style="position:absolute;left:419.73px;top:717.00px;font:normal 22.67px/normal 'Liberation Sans';color:#151515;white-space:nowrap;transform:scaleX(0.9695);transform-origin:0 0;">P...</div>
<div style="position:absolute;left:479.85px;top:717.00px;font:normal 22.67px/normal 'Liberation Sans';color:#151515;white-space:nowrap;transform:scaleX(1.0248);transform-origin:0 0;">Interfa...</div>
<div style="position:absolute;left:585.30px;top:717.00px;font:normal 22.67px/normal 'Liberation Sans';color:#151515;white-space:nowrap;transform:scaleX(0.9194);transform-origin:0 0;">VLAN ID</div>
<div style="position:absolute;left:764.98px;top:717.00px;font:normal 22.67px/normal 'Liberation Sans';color:#151515;white-space:nowrap;transform:scaleX(1.0167);transform-origin:0 0;">Network Name</div>
<div style="position:absolute;left:945.23px;top:717.00px;font:normal 22.67px/normal 'Liberation Sans';color:#151515;white-space:nowrap;transform:scaleX(1.0198);transform-origin:0 0;">Priority</div>
<div style="position:absolute;left:1087.68px;top:717.00px;font:normal 22.67px/normal 'Liberation Sans';color:#151515;white-space:nowrap;transform:scaleX(0.9618);transform-origin:0 0;">IPv4</div>
<div style="position:absolute;left:1214.08px;top:717.00px;font:normal 22.67px/normal 'Liberation Sans';color:#151515;white-space:nowrap;transform:scaleX(0.9594);transform-origin:0 0;">IPv6</div>
<div style="position:absolute;left:1340.71px;top:717.00px;font:normal 22.67px/normal 'Liberation Sans';color:#151515;white-space:nowrap;transform:scaleX(0.9935);transform-origin:0 0;">Circuit Provider</div>
<div style="position:absolute;left:1521.02px;top:717.00px;font:normal 22.67px/normal 'Liberation Sans';color:#151515;white-space:nowrap;transform:scaleX(0.9796);transform-origin:0 0;">Circuit Type</div>
<div style="position:absolute;left:1700.91px;top:717.00px;font:normal 22.67px/normal 'Liberation Sans';color:#151515;white-space:nowrap;transform:scaleX(0.9924);transform-origin:0 0;">Circuit Media</div>
<div style="position:absolute;left:1881.05px;top:700.50px;font:normal 22.67px/normal 'Liberation Sans';color:#151515;white-space:nowrap;transform:scaleX(0.9480);transform-origin:0 0;">Sub</div>
<div style="position:absolute;left:1879.94px;top:733.00px;font:normal 22.67px/normal 'Liberation Sans';color:#151515;white-space:nowrap;transform:scaleX(1.0321);transform-origin:0 0;">Interface</div>
<div style="position:absolute;left:2003.94px;top:716.80px;font:normal 22.67px/normal 'Liberation Sans';color:#151515;white-space:nowrap;transform:scaleX(1.0588);transform-origin:0 0;">M</div>
<div style="position:absolute;left:420.70px;top:783.80px;font:normal 22.38px/normal 'Liberation Sans';color:#111111;white-space:nowrap;transform:scaleX(0.9000);transform-origin:0 0;">0</div>
<div style="position:absolute;left:481.90px;top:783.80px;font:normal 22.38px/normal 'Liberation Sans';color:#111111;white-space:nowrap;transform:scaleX(1.0103);transform-origin:0 0;">vni-0/0</div>
<div style="position:absolute;left:622.20px;top:783.80px;font:normal 22.38px/normal 'Liberation Sans';color:#1b2b3b;white-space:nowrap;transform:scaleX(0.9000);transform-origin:0 0;">0</div>
<div style="position:absolute;left:772.13px;top:781.40px;font:normal 22.97px/normal 'Liberation Sans';color:#1b2b3b;white-space:nowrap;transform:scaleX(0.8841);transform-origin:0 0;">INET-1</div>
<div style="position:absolute;left:981.30px;top:781.40px;font:normal 22.97px/normal 'Liberation Sans';color:#1b2b3b;white-space:nowrap;transform:scaleX(0.8971);transform-origin:0 0;">---...</div>
<div style="position:absolute;left:1096.81px;top:781.40px;font:normal 22.97px/normal 'Liberation Sans';color:#1b2b3b;white-space:nowrap;transform:scaleX(0.8866);transform-origin:0 0;">DHCP</div>
<div style="position:absolute;left:1222.40px;top:781.40px;font:normal 22.97px/normal 'Liberation Sans';color:#1b2b3b;white-space:nowrap;transform:scaleX(1.0036);transform-origin:0 0;">None</div>
<div style="position:absolute;left:1527.88px;top:781.40px;font:normal 22.97px/normal 'Liberation Sans';color:#1b2b3b;white-space:nowrap;transform:scaleX(0.9205);transform-origin:0 0;">---Please ...</div>
<div style="position:absolute;left:1707.88px;top:781.40px;font:normal 22.97px/normal 'Liberation Sans';color:#1b2b3b;white-space:nowrap;transform:scaleX(0.9205);transform-origin:0 0;">---Please ...</div>
<div style="position:absolute;left:2003.88px;top:783.60px;font:normal 22.38px/normal 'Liberation Sans';color:#0a1ee8;white-space:nowrap;transform:scaleX(1.1250);transform-origin:0 0;">M</div>
<div style="position:absolute;left:621.21px;top:837.80px;font:normal 22.38px/normal 'Liberation Sans';color:#1b2b3b;white-space:nowrap;transform:scaleX(0.9890);transform-origin:0 0;">1000</div>
<div style="position:absolute;left:773.90px;top:835.40px;font:normal 22.97px/normal 'Liberation Sans';color:#1b2b3b;white-space:nowrap;transform:scaleX(0.8944);transform-origin:0 0;">AWS-Wes...</div>
<div style="position:absolute;left:981.30px;top:835.40px;font:normal 22.97px/normal 'Liberation Sans';color:#1b2b3b;white-space:nowrap;transform:scaleX(0.8971);transform-origin:0 0;">---...</div>
<div style="position:absolute;left:1096.75px;top:835.40px;font:normal 22.97px/normal 'Liberation Sans';color:#1b2b3b;white-space:nowrap;transform:scaleX(0.9476);transform-origin:0 0;">Static</div>
<div style="position:absolute;left:1222.40px;top:835.40px;font:normal 22.97px/normal 'Liberation Sans';color:#1b2b3b;white-space:nowrap;transform:scaleX(1.0036);transform-origin:0 0;">None</div>
<div style="position:absolute;left:1527.88px;top:835.40px;font:normal 22.97px/normal 'Liberation Sans';color:#1b2b3b;white-space:nowrap;transform:scaleX(0.9205);transform-origin:0 0;">---Please ...</div>
<div style="position:absolute;left:1707.88px;top:835.40px;font:normal 22.97px/normal 'Liberation Sans';color:#1b2b3b;white-space:nowrap;transform:scaleX(0.9205);transform-origin:0 0;">---Please ...</div>
<div style="position:absolute;left:2003.88px;top:837.60px;font:normal 22.38px/normal 'Liberation Sans';color:#0a1ee8;white-space:nowrap;transform:scaleX(1.1250);transform-origin:0 0;">M</div>
<div style="position:absolute;left:363.79px;top:1084.80px;font:normal 22.97px/normal 'Liberation Sans';color:#ffffff;white-space:nowrap;transform:scaleX(0.9119);transform-origin:0 0;">Back</div>
<div style="position:absolute;left:1605.04px;top:1084.80px;font:normal 22.97px/normal 'Liberation Sans';color:#ffffff;white-space:nowrap;transform:scaleX(0.9575);transform-origin:0 0;">Cancel</div>
<div style="position:absolute;left:1744.60px;top:1084.80px;font:normal 22.97px/normal 'Liberation Sans';color:#ffffff;white-space:nowrap;transform:scaleX(1.0032);transform-origin:0 0;">Continue</div>
<div style="position:absolute;left:1908.05px;top:1084.80px;font:normal 22.97px/normal 'Liberation Sans';color:#ffffff;white-space:nowrap;transform:scaleX(0.9522);transform-origin:0 0;">Recreate</div>
<div style="position:absolute;left:2016px;top:716px;width:36px;height:160px;background:#ebebeb;"></div>
</body></html>
